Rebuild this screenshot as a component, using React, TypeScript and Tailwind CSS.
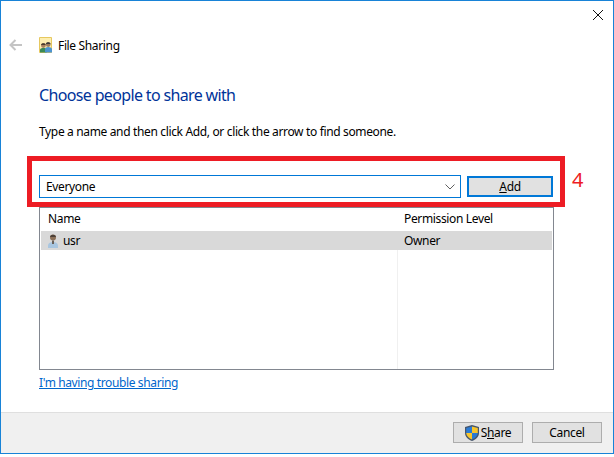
function ShieldIcon() {
  return (
    <svg width="14" height="16" viewBox="0 0 14 16" className="shrink-0">
      <path d="M7 0 L14 2 V8 C14 12 10.5 14.8 7 16 C3.5 14.8 0 12 0 8 V2 Z" fill="#46566c" />
      <path d="M7 1.4 V8 H1.2 V3 Z" fill="#2a7ad4" />
      <path d="M7 1.4 L12.8 3 V8 H7 Z" fill="#f7c52c" />
      <path d="M1.2 8 H7 V14.6 C4 13.5 1.6 11.3 1.2 8 Z" fill="#f7c52c" />
      <path d="M7 8 H12.8 C12.4 11.3 10 13.5 7 14.6 Z" fill="#2a7ad4" />
    </svg>
  );
}

function SharingIcon() {
  return (
    <svg width="13" height="16" viewBox="0 0 13 16" className="shrink-0">
      <path d="M0.5 0.5 H12.5 V15.5 H0.5 Z" fill="#fdeeb0" stroke="#e6c860" />
      <circle cx="4.4" cy="8.6" r="2.4" fill="#a8825f" />
      <path d="M2 8 C2.2 5.6 6.6 5.6 6.8 8 Z" fill="#4a3a2c" />
      <path d="M1 15.5 V13 C1 11.6 2.6 11 4.4 11 C6.2 11 7.6 11.6 7.6 13 V15.5 Z" fill="#3a8a58" />
      <circle cx="9.2" cy="7.6" r="2.4" fill="#9c7c60" />
      <path d="M6.8 7 C7 4.6 11.4 4.6 11.6 7 Z" fill="#3c3a38" />
      <path d="M6 15.5 V12.4 C6 10.8 7.6 10 9.2 10 C10.8 10 13 10.8 13 12.4 V15.5 Z" fill="#4c94d0" />
    </svg>
  );
}

function UserIcon() {
  return (
    <svg width="10" height="14" viewBox="0 0 10 14" className="shrink-0">
      <circle cx="5" cy="3.6" r="3" fill="#8c7058" />
      <path d="M2 3 C2.4 0 7.6 0 8 3 Z" fill="#4c4038" />
      <path d="M0 14 V11.5 C0 9.4 2 8 5 8 C8 8 10 9.4 10 11.5 V14 Z" fill="#a9c6e0" />
      <path d="M4 6.5 H6 V10 H4 Z" fill="#6a6058" />
    </svg>
  );
}

export default function App() {
  return (
    <div className="h-[454px] w-[614px] relative font-['Noto_Sans',sans-serif] text-[12px] leading-[16px] text-black bg-white">
      <div className="h-full flex flex-col border border-[#1883d7]">
        <div className="flex-1 flex flex-col">
          {/* title row */}
          <div className="flex items-center h-[16px] mt-[36px]">
            <svg width="14" height="12" viewBox="0 0 14 12" className="ml-[8px]">
              <path d="M13 6 H2 M6.5 1 L1.5 6 L6.5 11" fill="none" stroke="#c4c4c4" strokeWidth="2" />
            </svg>
            <div className="ml-[16px]">
              <SharingIcon />
            </div>
            <span className="ml-[6px] mt-[2px] tracking-[-0.35px]">File Sharing</span>
          </div>

          <div className="ml-[38px] mt-[30px] text-[16px] leading-[24px] text-[#003399] tracking-[-0.65px]">
            Choose people to share with
          </div>
          <div className="ml-[38px] mt-[17px] tracking-[-0.35px]">
            Type a name and then click Add, or click the arrow to find someone.
          </div>

          {/* picker row */}
          <div className="flex ml-[38px] mt-[35px] w-[515px] items-center">
            <div className="w-[422px] h-[23px] border border-[#0078d7] flex items-center justify-between pl-[6px] pr-[5px]">
              <span className="tracking-[-0.35px]">Everyone</span>
              <svg width="10" height="6" viewBox="0 0 10 6">
                <path d="M0.5 0.5 L5 5 L9.5 0.5" fill="none" stroke="#606060" />
              </svg>
            </div>
            <button className="ml-[6px] w-[86px] h-[21px] border-2 border-[#0078d7] bg-[#e1e1e1] tracking-[-0.35px]">
              <span className="underline">A</span>dd
            </button>
          </div>

          {/* list */}
          <div className="ml-[38px] mt-[9px] w-[515px] h-[163px] border border-[#828790] flex flex-col">
            <div className="flex h-[23px] pt-[3px] tracking-[-0.35px]">
              <div className="w-[364px] pl-[8px]">Name</div>
              <div>Permission Level</div>
            </div>
            <div className="flex h-[19px] mx-[1px] items-center bg-[#d9d9d9] tracking-[-0.35px]">
              <div className="w-[363px] pl-[7px] flex items-center gap-[5px]">
                <UserIcon />
                <span>usr</span>
              </div>
              <div>Owner</div>
            </div>
            <div className="flex-1 ml-[357px] border-l border-[#f0f0f0]"></div>
          </div>

          <a className="self-start ml-[38px] mt-[5px] text-[#0066cc] underline tracking-[-0.38px]">I'm having trouble sharing</a>
        </div>

        {/* footer */}
        <div className="h-[41px] bg-[#f0f0f0] border-t border-[#dfdfdf] flex justify-end items-start pt-[9px] pr-[11px] gap-[9px]">
          <button className="w-[70px] h-[21px] border border-[#adadad] bg-[#e1e1e1] flex items-center justify-center gap-[2px] tracking-[-0.35px]">
            <ShieldIcon />
            <span>S<span className="underline">h</span>are</span>
          </button>
          <button className="w-[70px] h-[21px] border border-[#adadad] bg-[#e1e1e1] tracking-[-0.35px]">Cancel</button>
        </div>
      </div>

      {/* close glyph */}
      <svg width="10" height="10" viewBox="0 0 10 10" className="absolute left-[593px] top-[10px]">
        <path d="M0 0 L10 10 M10 0 L0 10" stroke="#111" strokeWidth="1" />
      </svg>

      {/* red annotation */}
      <div className="absolute left-[27px] top-[156px] w-[538px] h-[51px] border-[5px] border-[#ed1c24]"></div>
      <span className="absolute left-[572px] top-[166px] text-[20px] leading-[28px] text-[#ed1c24]">4</span>
    </div>
  );
}
